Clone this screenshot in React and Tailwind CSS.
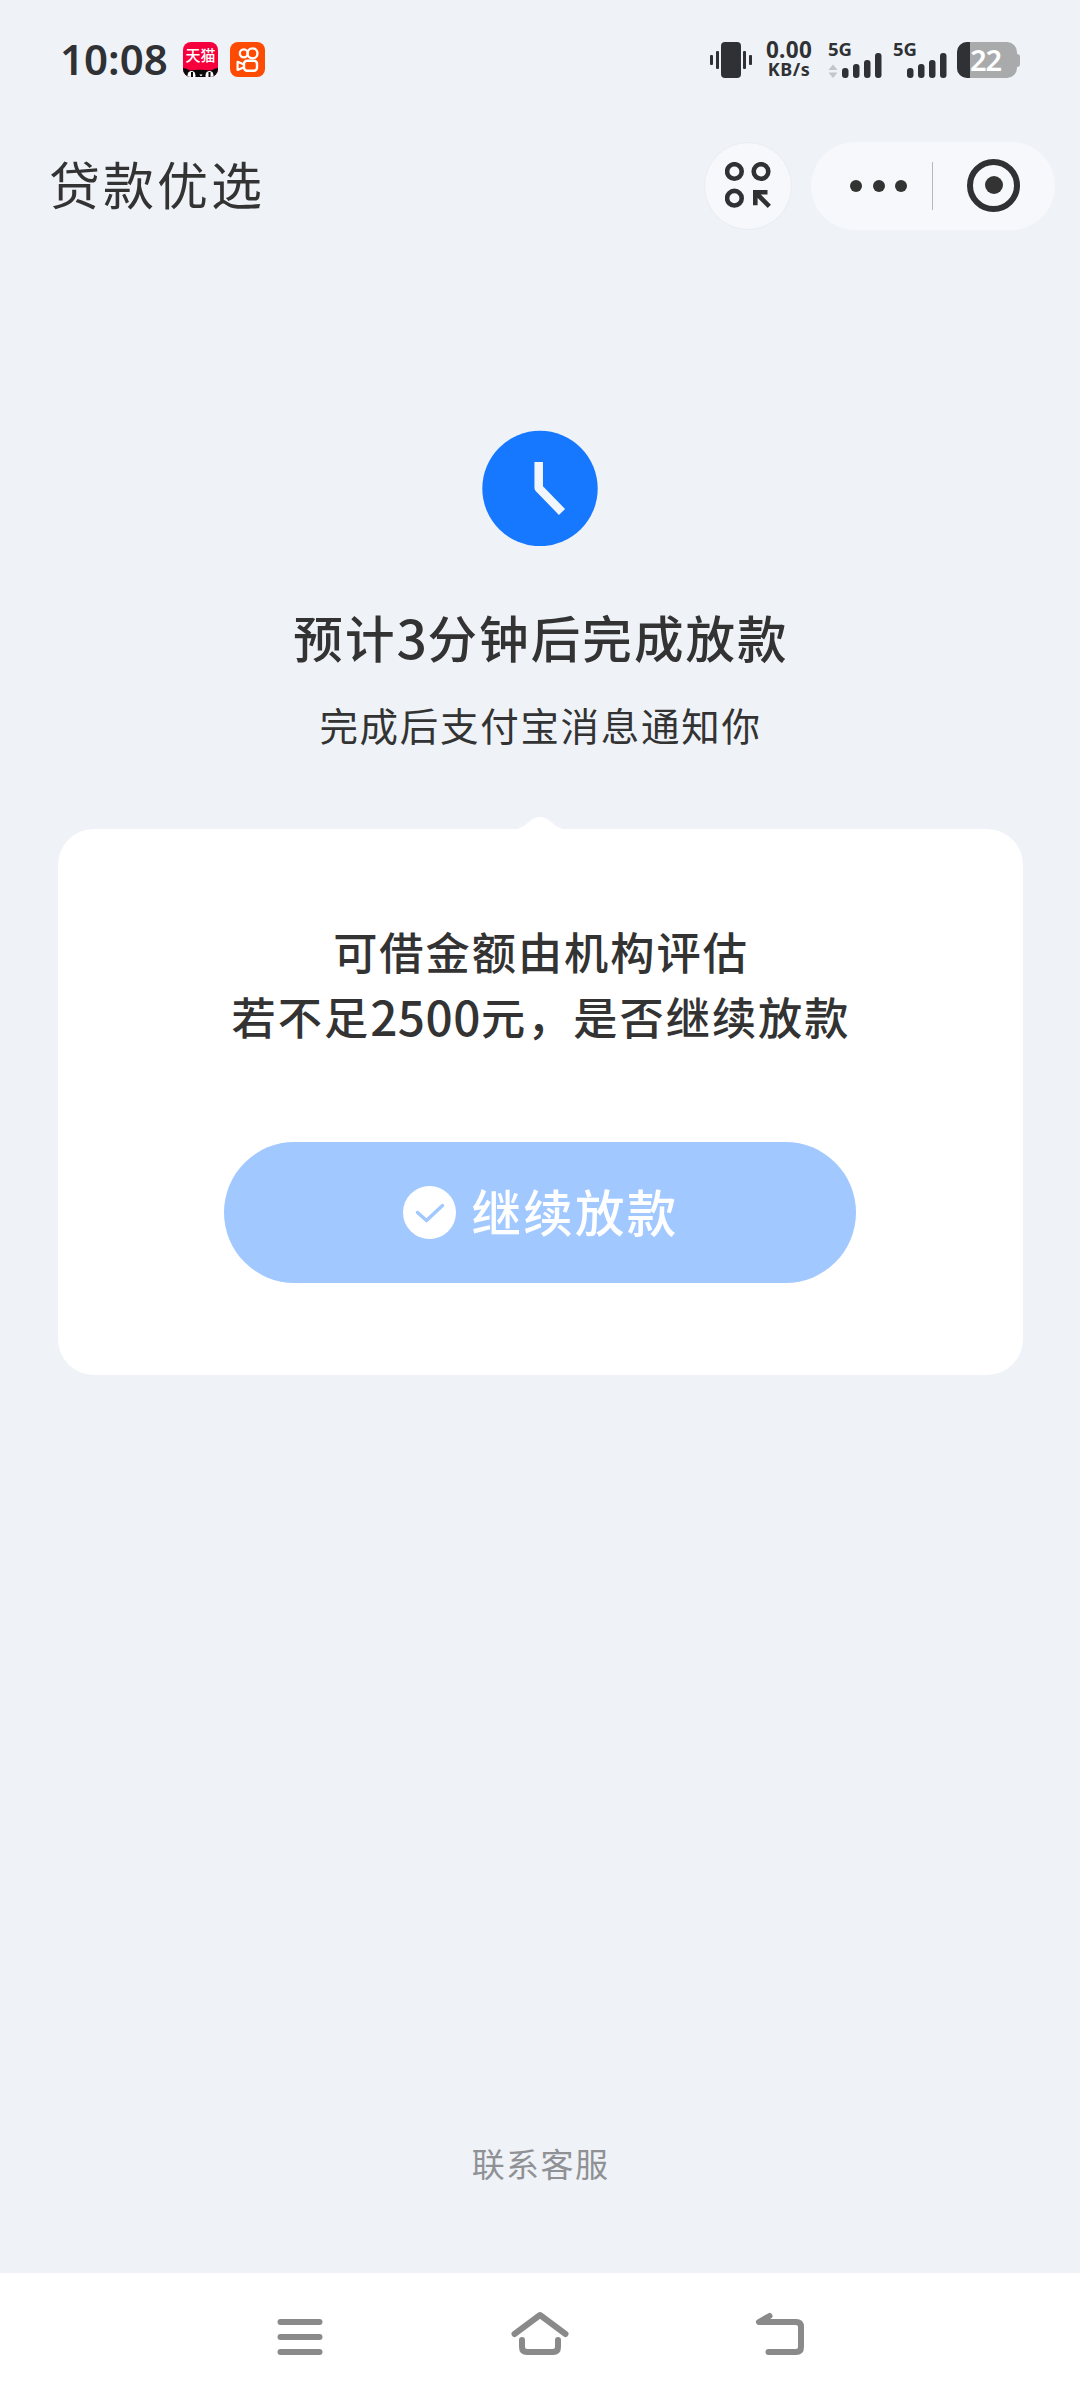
import React from 'react';

const SIGNAL_TOPS = [16, 12, 8, 1];

function TmallIcon() {
  return (
    <div className="relative w-[35px] h-[35px] rounded-[8px] bg-[#f5003c] overflow-hidden">
      <div className="pt-[2px] text-center text-[15px] leading-[23px] font-medium text-white whitespace-nowrap">天猫</div>
      <svg className="absolute left-0 bottom-0" width="35" height="9" viewBox="0 0 35 9">
        <path d="M0 0 Q3 0 7 2.500 Q17 1 28 2.500 Q32 0 35 0 V9 H0Z" fill="#0a0a0a" />
        <ellipse cx="8.5" cy="7.500" rx="4" ry="4.500" fill="#fff" />
        <ellipse cx="26.5" cy="7.500" rx="4" ry="4.500" fill="#fff" />
        <path d="M9 4v5M26.500 4v5" stroke="#0a0a0a" strokeWidth="2" />
        <path d="M16.500 6.500h3l-1 1.500h-1z" fill="#fff" />
      </svg>
    </div>
  );
}

function KwaiIcon() {
  return (
    <svg width="35" height="35" viewBox="0 0 35 35" fill="none" stroke="#fff">
      <rect width="35" height="35" rx="8" fill="#fd4b04" stroke="none" />
      <circle cx="13.8" cy="11.3" r="4" strokeWidth="2.3" />
      <circle cx="22.5" cy="11.3" r="5" strokeWidth="2.3" />
      <rect x="14" y="18.8" width="13" height="10" rx="3" strokeWidth="2.4" />
      <path d="M13.5 22.2 L7.6 19.8 V28 L13.5 25.6" strokeWidth="2.2" strokeLinejoin="round" />
    </svg>
  );
}

function VibrateIcon() {
  return (
    <svg width="42" height="36" viewBox="0 0 42 36" fill="#2f3134">
      <rect x="0" y="13" width="3" height="10" rx="1" />
      <rect x="6" y="9" width="3" height="18" rx="1" />
      <rect x="11" y="0" width="20" height="36" rx="4" />
      <rect x="33" y="9" width="3" height="18" rx="1" />
      <rect x="39" y="13" width="3" height="10" rx="1" />
    </svg>
  );
}

function Signal({ arrows }) {
  return (
    <div className="w-[54px] h-[36px] flex flex-col">
      <div className="h-[11px] text-[18.500px] leading-[14px] font-bold">5G</div>
      <svg width="54" height="25" viewBox="0 0 54 25">
        {arrows && <path d="M5 11.5 L9.5 17 H0.500Z M5 25 L0.500 19.500 H9.500Z" fill="#c3c5c8" />}
        {SIGNAL_TOPS.map((top, i) => (
          <rect key={top} x={14 + i * 11} y={top - 1} width="6.500" height={26 - top} rx="3" fill="#2f3134" />
        ))}
      </svg>
    </div>
  );
}

function Battery() {
  return (
    <div className="flex items-center">
      <div className="w-[60px] h-[36px] rounded-[10px] bg-[#a9aaac] flex">
        <div className="w-[13px] h-full rounded-l-[10px] bg-[#2f3134]" />
        <div className="text-[29px] leading-[36px] font-semibold text-white -tracking-[1px]">22</div>
      </div>
      <div className="w-[3px] h-[13px] rounded-r-[3px] bg-[#a9aaac]" />
    </div>
  );
}

function StatusBar() {
  return (
    <div className="h-[120px] pt-[42px] pl-[60px] pr-[60px] flex items-start justify-between text-[#2f3134]">
      <div className="flex items-start">
        <div className="w-[123px] h-[36px] text-[42px] leading-[34px] font-semibold whitespace-nowrap">10:08</div>
        <TmallIcon />
        <div className="w-3" />
        <KwaiIcon />
      </div>
      <div className="flex items-start">
        <VibrateIcon />
        <div className="ml-[11px] w-[52px] text-center font-bold">
          <div className="text-[22.500px] leading-[16px] tracking-[0.300px]">0.00</div>
          <div className="text-[18px] leading-[23px] tracking-[0.500px]">KB/s</div>
        </div>
        <div className="ml-[13px]"><Signal arrows /></div>
        <div className="ml-[11px]"><Signal /></div>
        <div className="ml-[10px]"><Battery /></div>
      </div>
    </div>
  );
}

function Header() {
  return (
    <div className="h-[132px] pt-[22px] pl-[49px] pr-[25px] flex items-start justify-between text-[#333]">
      <h1 className="text-[51px] leading-[86px] tracking-[3px]">贷款优选</h1>
      <div className="flex gap-[19px]">
        <div className="w-[88px] h-[88px] rounded-full bg-[#f7f8fb] border border-[#e9ecf1] flex items-center justify-center">
          <svg className="mb-[2px] mr-px" width="46" height="46" viewBox="0 0 46 46" fill="none" stroke="#2f3133" strokeWidth="4.600">
            <circle cx="9.400" cy="9.500" r="7.300" />
            <circle cx="36" cy="9.500" r="7.300" />
            <circle cx="9.400" cy="36.200" r="7.300" />
            <path d="M30.300 43.300 V30.300 H42.500 M31 31 L44.300 44.300" />
          </svg>
        </div>
        <div className="w-[244px] h-[88px] rounded-full bg-[#f7f8fb] flex items-center">
          <div className="w-[121px] pl-[39px] flex gap-[10.500px]">
            <span className="w-3 h-3 rounded-full bg-[#333]" />
            <span className="w-3 h-3 rounded-full bg-[#333]" />
            <span className="w-3 h-3 rounded-full bg-[#333]" />
          </div>
          <div className="w-px h-12 bg-[#b5b7ba]" />
          <div className="ml-[34px] mb-[2px] w-[53px] h-[53px] rounded-full border-[6px] border-[#303133] flex items-center justify-center">
            <div className="w-[18px] h-[18px] rounded-full bg-[#333]" />
          </div>
        </div>
      </div>
    </div>
  );
}

function Digits({ children }) {
  return <span className="relative top-px text-[1.08em] leading-none tracking-[0.5px] font-['Noto_Sans_CJK_SC',sans-serif]">{children}</span>;
}

function ResultCard() {
  return (
    <div className="relative mt-[75px] mx-auto w-[965px] h-[546px] rounded-[36px] bg-white flex flex-col items-center text-[#333]">
      <svg className="absolute -top-[12px] left-[454px]" width="56" height="13" viewBox="0 0 56 13">
        <path d="M0 13 C9 12 12 9 18 4 Q28 -4 38 4 C44 9 47 12 56 13Z" fill="#fff" />
      </svg>
      <p className="h-[221px] pt-[92px] pl-[2px] text-center text-[44.200px] leading-[65px] tracking-[2px] font-medium whitespace-nowrap">
        可借金额由机构评估
        <br />
        若不足<Digits>2500</Digits>元，是否继续放款
      </p>
      <button className="mt-[92px] w-[632px] h-[141px] rounded-full bg-[#a1c8ff] flex items-center justify-center gap-[15px]">
        <svg className="ml-[2px]" width="53" height="53" viewBox="0 0 53 53">
          <circle cx="26.500" cy="26.500" r="26.500" fill="#fff" />
          <path d="M14.500 26.500 L23.500 34.500 L39.500 19.500" fill="none" stroke="#a1c8ff" strokeWidth="3.500" strokeLinecap="round" strokeLinejoin="round" />
        </svg>
        <span className="text-[49.500px] leading-[72px] tracking-[2.300px] font-medium text-white">继续放款</span>
      </button>
    </div>
  );
}

function NavBar() {
  return (
    <div className="h-[127px] bg-white">
      <svg width="1080" height="127" viewBox="0 2273 1080 127" fill="none" stroke="#8a8a8a" strokeWidth="6" strokeLinecap="round" strokeLinejoin="round">
        <path d="M280.500 2322 H319.500 M280.500 2337 H319.500 M280.500 2352 H319.500" />
        <path d="M514.500 2334 L540 2315 L565.500 2334" />
        <path d="M522 2340 V2347 Q522 2352 527 2352 H553 Q558 2352 558 2347 V2340" />
        <path d="M769.500 2316 L759 2322 H796 Q801 2322 801 2327 V2347 Q801 2352 796 2352 H768.500" />
      </svg>
    </div>
  );
}

export default function App() {
  return (
    <div className="w-[1080px] h-[2400px] bg-[#eff3f8] flex flex-col overflow-hidden font-['Noto_Sans','Noto_Sans_CJK_SC',sans-serif]">
      <StatusBar />
      <Header />

      {/* Loan progress */}
      <main className="flex-1 pt-[178px] flex flex-col items-center text-[#333]">
        <svg width="116" height="116" viewBox="0 0 116 116">
          <circle cx="58" cy="58.500" r="57.700" fill="#1677ff" />
          <path d="M56.700 32 V58 L80 82" fill="none" stroke="#f2f6fb" strokeWidth="8.500" strokeLinejoin="round" />
        </svg>
        <h2 className="mt-[57px] pl-[2px] h-[72px] text-[49.500px] leading-[72px] tracking-[2.100px] font-medium">
          预计<Digits>3</Digits>分钟后完成放款
        </h2>
        <p className="mt-[23px] pl-px text-[38.500px] leading-[56px] tracking-[1.700px]">完成后支付宝消息通知你</p>
        <ResultCard />
      </main>

      <div className="h-[133px] pl-[1px] text-center text-[33px] leading-[49px] tracking-[1.400px] text-[#8f9195]">联系客服</div>
      <NavBar />
    </div>
  );
}
